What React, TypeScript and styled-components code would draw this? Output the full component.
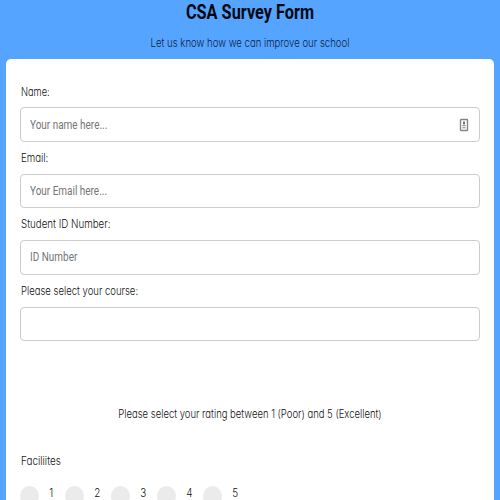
import React from "react";
import styled, { createGlobalStyle } from "styled-components";

const GlobalStyle = createGlobalStyle`
  * { box-sizing: border-box; }
  html, body { margin: 0; height: 500px; overflow: hidden; background: #55a4ff; }
  body { font-family: Inter, "Liberation Sans", sans-serif; color: #111; }
`;

const Page = styled.main`
  width: 500px;
  height: 500px;
  overflow: hidden;
  background: #55a4ff;
  display: flex;
  flex-direction: column;
`;

const Header = styled.header`
  flex: none;
  height: 59px;
  text-align: center;
`;

const Title = styled.h1`
  margin: 0;
  height: 24px;
  font: 700 20px/24px Roboto, sans-serif;
  color: #03080f;
  white-space: nowrap;
  transform: scaleX(0.815);
`;

const Subtitle = styled.p`
  margin: 11px 0 0;
  font-size: 11px;
  font-weight: 300;
  line-height: 16px;
  font-feature-settings: "cv11";
  color: #0c2440;
  white-space: nowrap;
  transform: scaleX(0.87);
`;

const Card = styled.form`
  flex: none;
  width: 488px;
  height: 460px;
  margin: 0 auto;
  padding: 24.5px 14px 0;
  background: #fff;
  border-radius: 5px 5px 0 0;
`;

const Field = styled.div`
  height: 66.4px;
`;

const Label = styled.label<{ $scale?: number }>`
  display: block;
  width: max-content;
  height: 16px;
  margin-left: 1px;
  font-size: 11px;
  font-weight: 300;
  line-height: 16px;
  font-feature-settings: "cv11";
  white-space: nowrap;
  transform: scaleX(${(p) => p.$scale ?? 0.9});
  transform-origin: 0 50%;
`;

const InputBox = styled.div`
  display: flex;
  align-items: center;
  justify-content: space-between;
  height: 34.5px;
  margin-top: 7.9px;
  padding: 0 10px 0 9px;
  border: 1px solid #ccc;
  border-radius: 4px;
`;

const Placeholder = styled.span`
  font: 400 12px/16px Roboto, sans-serif;
  color: #757575;
  white-space: nowrap;
  transform: scaleX(0.83);
  transform-origin: 0 50%;
`;

const Prompt = styled.p`
  margin: 56.9px 0 0;
  font-size: 11px;
  font-weight: 300;
  line-height: 16px;
  text-align: center;
  font-feature-settings: "cv11";
  white-space: nowrap;
  transform: scaleX(0.863);
`;

const Rating = styled.section`
  margin-top: 31px;
`;

const Options = styled.div`
  display: grid;
  grid-template-columns: 45px 46px 46px 46px 46px;
  margin-top: 17px;
`;

const Option = styled.div`
  display: flex;
  align-items: flex-start;
`;

const Radio = styled.span`
  flex: none;
  width: 19px;
  height: 20px;
  border-radius: 50%;
  background: #ebebeb;
`;

const OptionText = styled.span`
  margin-left: 10px;
  font-size: 11px;
  font-weight: 300;
  line-height: 14px;
  transform: scaleX(0.9);
`;

const ContactIcon = () => (
  <svg width="10" height="14" viewBox="0 0 10 14" fill="none">
    <rect x="1.5" y="1.5" width="7" height="11" rx="0.6" stroke="#858585" strokeWidth="1.4" />
    <rect x="4" y="3.5" width="2" height="3" fill="#777" />
    <path d="M3.3 7.7h3.4M3.3 9.8h3.4" stroke="#888" />
  </svg>
);

const fields = [
  { label: "Name:", hint: "Your name here...", scale: 0.84, icon: true },
  { label: "Email:", hint: "Your Email here...", scale: 0.88 },
  { label: "Student ID Number:", hint: "ID Number", scale: 0.886 },
  { label: "Please select your course:", hint: "", scale: 0.865 },
];

export default function App() {
  return (
    <>
      <GlobalStyle />
      <Page>
        <Header>
          <Title>CSA Survey Form</Title>
          <Subtitle>Let us know how we can improve our school</Subtitle>
        </Header>
        <Card>
          {fields.map((f) => (
            <Field key={f.label}>
              <Label $scale={f.scale}>{f.label}</Label>
              <InputBox>
                <Placeholder>{f.hint}</Placeholder>
                {f.icon && <ContactIcon />}
              </InputBox>
            </Field>
          ))}
          <Prompt>Please select your rating between 1 (Poor) and 5 (Excellent)</Prompt>
          <Rating>
            <Label>Faciliites</Label>
            <Options>
              {[1, 2, 3, 4, 5].map((n) => (
                <Option key={n}>
                  <Radio />
                  <OptionText>{n}</OptionText>
                </Option>
              ))}
            </Options>
          </Rating>
        </Card>
      </Page>
    </>
  );
}
